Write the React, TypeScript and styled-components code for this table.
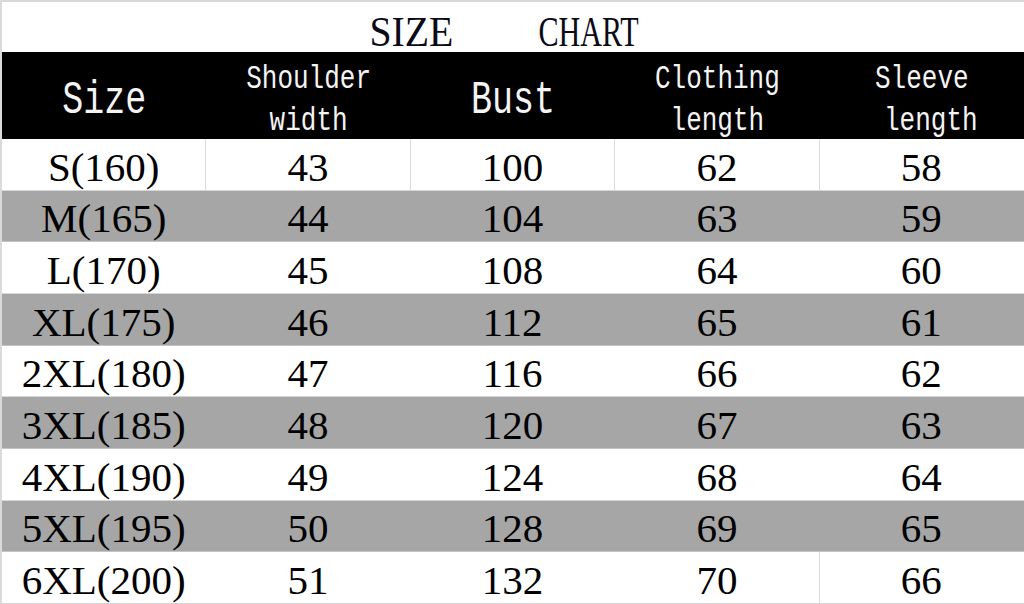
import React from "react";
import styled, { createGlobalStyle } from "styled-components";

const GlobalStyle = createGlobalStyle`
  html,
  body {
    margin: 0;
    padding: 0;
    background: #ffffff;
  }
  body {
    width: 1024px;
    height: 604px;
    overflow: hidden;
  }
`;

const Sheet = styled.div`
  width: 1024px;
  height: 604px;
  box-sizing: border-box;
  display: grid;
  grid-template-rows: 52px 87px repeat(9, 1fr);
  border-left: 2px solid #dadada;
  background: #ffffff;
  overflow: hidden;
  font-family: "Liberation Serif", "Times New Roman", serif;
  color: #000000;
`;

const TitleRow = styled.div`
  box-sizing: border-box;
  display: flex;
  justify-content: center;
  align-items: flex-start;
  gap: 61px;
  padding-top: 8px;
  border-top: 2px solid #d8d8d8;
  font-size: 43px;
  line-height: 43px;
  color: #0a0a18;
`;

const TitleWord = styled.span<{ $squeeze: number }>`
  display: inline-block;
  transform: scaleX(${(p) => p.$squeeze});
`;

const HeaderRow = styled.div`
  display: grid;
  grid-template-columns: repeat(5, 1fr);
  background: #000000;
`;

const HeaderCell = styled.div`
  display: flex;
  align-items: center;
  justify-content: center;
  padding-top: 10px;
  font-family: "Liberation Mono", "DejaVu Sans Mono", monospace;
  color: #f4f4f4;
`;

const HeaderLabel = styled.div<{ $size: number; $lines: number }>`
  display: flex;
  flex-direction: column;
  align-items: center;
  font-size: ${(p) => p.$size}px;
  line-height: ${(p) => (p.$lines > 1 ? 31.5 : 40)}px;
  transform: scaleY(1.3);
  white-space: pre;
`;

const SubLine = styled.span<{ $indent?: number }>`
  padding-left: ${(p) => p.$indent ?? 0}px;
`;

const DataRow = styled.div<{ $shaded: boolean; $marked?: boolean }>`
  box-sizing: border-box;
  display: grid;
  grid-template-columns: repeat(5, 1fr);
  background: ${(p) => (p.$shaded ? "#a6a6a6" : "#ffffff")};
  border-bottom: 1px solid ${(p) => (p.$shaded ? "#c4c4c4" : "#d6d6d6")};
  box-shadow: ${(p) => (p.$marked ? "-2px 0 0 #1f8f4e" : "none")};
`;

const DataCell = styled.div<{ $ruled: boolean }>`
  display: flex;
  align-items: center;
  justify-content: center;
  padding-top: 6px;
  font-size: 41px;
  line-height: 41px;
  border-right: 1px solid ${(p) => (p.$ruled ? "#dcdcdc" : "transparent")};

  &:last-child {
    border-right-color: transparent;
  }
`;

type SizeRow = {
  size: string;
  cm: number;
  shoulder: number;
  bust: number;
  length: number;
  sleeve: number;
};

const rows: SizeRow[] = [
  { size: "S", cm: 160, shoulder: 43, bust: 100, length: 62, sleeve: 58 },
  { size: "M", cm: 165, shoulder: 44, bust: 104, length: 63, sleeve: 59 },
  { size: "L", cm: 170, shoulder: 45, bust: 108, length: 64, sleeve: 60 },
  { size: "XL", cm: 175, shoulder: 46, bust: 112, length: 65, sleeve: 61 },
  { size: "2XL", cm: 180, shoulder: 47, bust: 116, length: 66, sleeve: 62 },
  { size: "3XL", cm: 185, shoulder: 48, bust: 120, length: 67, sleeve: 63 },
  { size: "4XL", cm: 190, shoulder: 49, bust: 124, length: 68, sleeve: 64 },
  { size: "5XL", cm: 195, shoulder: 50, bust: 128, length: 69, sleeve: 65 },
  { size: "6XL", cm: 200, shoulder: 51, bust: 132, length: 70, sleeve: 66 },
];

// which cells still show their grid line (only the first row, and the last one before "Sleeve")
const ruledFor = (rowIndex: number, colIndex: number) => {
  if (rowIndex === 0) return true;
  if (rowIndex === rows.length - 1) return colIndex === 3;
  return false;
};

export default function App() {
  return (
    <>
      <GlobalStyle />
      <Sheet>
        <TitleRow>
          <TitleWord $squeeze={0.925}>SIZE</TitleWord>
          <TitleWord $squeeze={0.7}>CHART</TitleWord>
        </TitleRow>

        <HeaderRow>
          <HeaderCell>
            <HeaderLabel $size={35} $lines={1}>Size</HeaderLabel>
          </HeaderCell>
          <HeaderCell>
            <HeaderLabel $size={26} $lines={2}>
              <SubLine>Shoulder</SubLine>
              <SubLine>width</SubLine>
            </HeaderLabel>
          </HeaderCell>
          <HeaderCell>
            <HeaderLabel $size={35} $lines={1}>Bust</HeaderLabel>
          </HeaderCell>
          <HeaderCell>
            <HeaderLabel $size={26} $lines={2}>
              <SubLine>Clothing</SubLine>
              <SubLine>length</SubLine>
            </HeaderLabel>
          </HeaderCell>
          <HeaderCell>
            <HeaderLabel $size={26} $lines={2}>
              <SubLine>Sleeve</SubLine>
              <SubLine $indent={18}>length</SubLine>
            </HeaderLabel>
          </HeaderCell>
        </HeaderRow>

        {rows.map((r, i) => {
          const values = [`${r.size}(${r.cm})`, r.shoulder, r.bust, r.length, r.sleeve];
          return (
            <DataRow key={r.size} $shaded={i % 2 === 1} $marked={r.size === "5XL"}>
              {values.map((v, j) => (
                <DataCell key={j} $ruled={ruledFor(i, j)}>
                  {v}
                </DataCell>
              ))}
            </DataRow>
          );
        })}
      </Sheet>
    </>
  );
}
